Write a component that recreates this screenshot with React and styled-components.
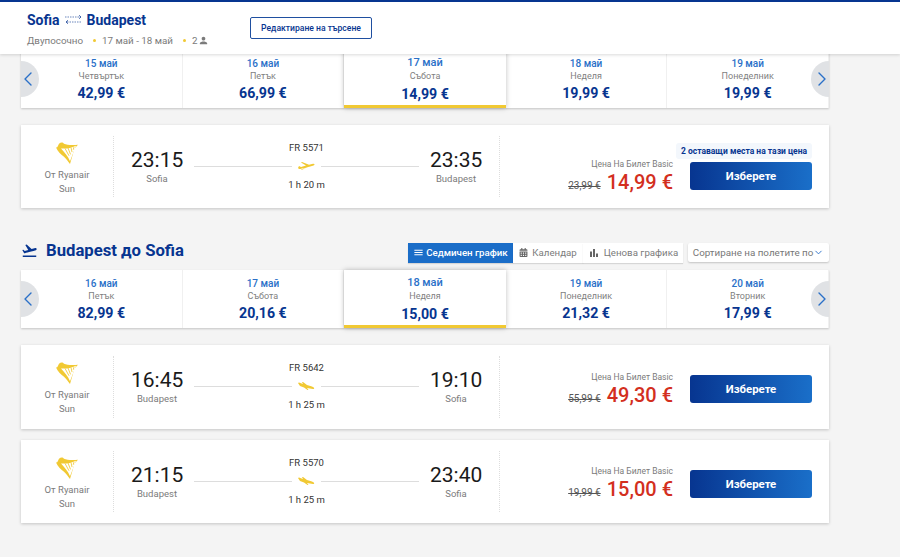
import React from "react";
import styled, { createGlobalStyle } from "styled-components";
import { ChevronLeft, ChevronRight, ChevronDown } from "lucide-react";
import { MdFlightTakeoff, MdMenu, MdPerson, MdBarChart } from "react-icons/md";
import { FaCalendarAlt } from "react-icons/fa";

const BLUE = "#073590";
const LINK = "#2a70c8";
const YELLOW = "#f1c933";

const outboundDays = [
  { date: "15 май", day: "Четвъртък", price: "42,99 €" },
  { date: "16 май", day: "Петък", price: "66,99 €" },
  { date: "17 май", day: "Събота", price: "14,99 €", active: true },
  { date: "18 май", day: "Неделя", price: "19,99 €" },
  { date: "19 май", day: "Понеделник", price: "19,99 €" },
];

const returnDays = [
  { date: "16 май", day: "Петък", price: "82,99 €" },
  { date: "17 май", day: "Събота", price: "20,16 €" },
  { date: "18 май", day: "Неделя", price: "15,00 €", active: true },
  { date: "19 май", day: "Понеделник", price: "21,32 €" },
  { date: "20 май", day: "Вторник", price: "17,99 €" },
];

const returnFlights = [
  { number: "FR 5642", from: "16:45", to: "19:10", duration: "1 h 25 m", oldPrice: "55,99 €", price: "49,30 €" },
  { number: "FR 5570", from: "21:15", to: "23:40", duration: "1 h 25 m", oldPrice: "19,99 €", price: "15,00 €" },
];

const GlobalStyle = createGlobalStyle`
  html, body {
    margin: 0;
    background: #f4f4f4;
    font-family: Roboto, "Liberation Sans", sans-serif;
  }
  * { box-sizing: border-box; }
`;

const Page = styled.div`
  width: 900px;
  height: 557px;
  overflow: hidden;
  background: #f4f4f4;
`;

const Header = styled.header`
  position: relative;
  z-index: 2;
  height: 54px;
  padding: 10px 0 0 27px;
  display: flex;
  align-items: flex-start;
  background: #fff;
  border-top: 2px solid ${BLUE};
  box-shadow: 0 1px 3px rgba(0, 0, 0, 0.15);
`;

const Summary = styled.div`
  width: 223px;
`;

const Route = styled.div`
  display: flex;
  align-items: center;
  gap: 5px;
  height: 15px;
  font-size: 14px;
  font-weight: 700;
  color: ${BLUE};
`;

const Meta = styled.div`
  display: flex;
  align-items: center;
  height: 13px;
  margin-top: 7px;
  font-size: 9.8px;
  color: #7b7b7b;
`;

const Dot = styled.span`
  width: 3px;
  height: 3px;
  margin: 0 6px 0 10px;
  border-radius: 50%;
  background: ${YELLOW};
`;

const EditButton = styled.button`
  width: 122px;
  height: 22px;
  margin-top: 5px;
  padding: 0;
  font: 500 8.6px Roboto, sans-serif;
  color: ${BLUE};
  background: #fff;
  border: 1px solid #1f4fa0;
  border-radius: 2px;
`;

const Main = styled.main`
  width: 808px;
  margin-left: 21px;
`;

const DayStrip = styled.div`
  position: relative;
  display: grid;
  grid-template-columns: repeat(5, 1fr);
  height: 58px;
  margin-top: ${(p) => p.$offset}px;
  background: #fff;
  box-shadow: 0 1px 2px rgba(0, 0, 0, 0.2);
`;

const DayCell = styled.div`
  position: relative;
  display: flex;
  flex-direction: column;
  align-items: center;
  justify-content: flex-end;
  padding-bottom: 6px;
  border-right: 1px solid #f0f0f0;

  ${(p) =>
    p.$active &&
    `
    padding-bottom: 2px;
    border-right: 0;
    border-bottom: 3px solid ${YELLOW};
    box-shadow: 0 0 5px rgba(0, 0, 0, 0.25);
    z-index: 1;
  `}
`;

const DayDate = styled.div`
  font-size: ${(p) => (p.$active ? 11 : 10)}px;
  line-height: 13px;
  font-weight: 500;
  color: ${LINK};
`;

const DayName = styled.div`
  margin-top: ${(p) => (p.$active ? 2 : 1)}px;
  font-size: 9px;
  line-height: 11px;
  color: #7f7f7f;
`;

const DayPrice = styled.div`
  margin-top: ${(p) => (p.$active ? 4 : 3)}px;
  font-size: 14.2px;
  line-height: 17px;
  font-weight: 700;
  color: ${BLUE};
`;

const Arrow = styled.div`
  position: absolute;
  z-index: 2;
  top: 11px;
  ${(p) => (p.$right ? "right: 0; padding-left: 4px" : "left: 0; padding-right: 4px")};
  width: 18px;
  height: 36px;
  display: flex;
  align-items: center;
  justify-content: center;
  background: #e0e2e5;
  color: ${LINK};
  border-radius: ${(p) => (p.$right ? "18px 0 0 18px" : "0 18px 18px 0")};

  svg {
    flex: none;
  }
`;

const Card = styled.article`
  display: flex;
  height: ${(p) => p.$height || 83}px;
  margin-top: ${(p) => p.$gap}px;
  background: #fff;
  box-shadow: 0 1px 3px rgba(0, 0, 0, 0.2);
`;

const Carrier = styled.div`
  width: 93px;
  margin: 11px 0;
  display: flex;
  flex-direction: column;
  align-items: center;
  font-size: 9.5px;
  line-height: 14px;
  color: #7b7b7b;
  border-right: 1px dotted #ddd;
`;

const Logo = styled.svg`
  width: 22px;
  height: 22px;
  margin: 6px 0 4px;
`;

const Flight = styled.div`
  width: 386px;
  margin: 11px 0;
  padding: 0 17px;
  display: flex;
  gap: 11px;
  border-right: 1px dotted #ddd;
`;

const Stop = styled.div`
  width: 52px;
  padding-top: 12px;
  text-align: center;
`;

const Time = styled.div`
  font-size: 21px;
  line-height: 24px;
  color: #1a1a1a;
`;

const Place = styled.div`
  margin-top: 1px;
  font-size: 9.5px;
  line-height: 12px;
  color: #7b7b7b;
`;

const Path = styled.div`
  width: 225px;
  padding-top: 6px;
  text-align: center;
  font-size: 9.5px;
  line-height: 12px;
  color: #333;
`;

const PathLine = styled.div`
  display: flex;
  align-items: center;
  gap: 6px;
  margin: 7px 0 8px;
  height: 10px;

  &::before,
  &::after {
    content: "";
    flex: 1;
    height: 1px;
    background: #ddd;
  }
`;

const Fare = styled.div`
  flex: 1;
  display: flex;
  justify-content: flex-end;
  align-items: flex-start;
  gap: 17px;
  padding: ${(p) => (p.$badge ? 18 : 30)}px 17px 0 0;
`;

const FareInfo = styled.div`
  align-self: flex-end;
  margin-bottom: ${(p) => (p.$badge ? 14 : 22)}px;
  text-align: right;
`;

const FareLabel = styled.div`
  font-size: 8.5px;
  line-height: 11px;
  color: #7b7b7b;
`;

const FarePrice = styled.div`
  display: flex;
  align-items: baseline;
  justify-content: flex-end;
  gap: 6px;
`;

const OldPrice = styled.span`
  font-size: 10px;
  color: #555;
  text-decoration: line-through;
`;

const Price = styled.span`
  font-size: 20px;
  line-height: 24px;
  font-weight: 500;
  color: #d32f1e;
`;

const Actions = styled.div`
  width: 122px;
  display: flex;
  flex-direction: column;
  align-items: flex-end;
`;

const SeatsBadge = styled.div`
  width: 136px;
  height: 16px;
  margin-bottom: 3px;
  flex: none;
  text-align: center;
  font-size: 8.5px;
  line-height: 16px;
  font-weight: 700;
  white-space: nowrap;
  color: ${BLUE};
  background: #f3f7fc;
  border-radius: 3px;
`;

const SelectButton = styled.button`
  width: 122px;
  height: 28px;
  padding: 0;
  font: 700 11.4px Roboto, sans-serif;
  color: #fff;
  background: linear-gradient(90deg, ${BLUE}, #1a6fc9);
  border: 0;
  border-radius: 3px;
`;

const SectionHead = styled.div`
  display: flex;
  align-items: center;
  height: 21px;
  margin-top: 34px;
`;

const SectionTitle = styled.h2`
  flex: 1;
  display: flex;
  align-items: center;
  gap: 8px;
  margin: 0 0 4px;
  font-size: 16.7px;
  font-weight: 700;
  color: ${BLUE};
`;

const ViewTab = styled.div`
  display: flex;
  align-items: center;
  justify-content: center;
  gap: ${(p) => (p.$active ? 2 : 4)}px;
  width: ${(p) => p.$width}px;
  height: 20px;
  font-size: 9.7px;
  font-weight: ${(p) => (p.$active ? 500 : 400)};
  color: ${(p) => (p.$active ? "#fff" : "#7b7b7b")};
  background: ${(p) => (p.$active ? "#1a6dc8" : "#fff")};
  box-shadow: 0 1px 1px rgba(0, 0, 0, 0.12);

  svg {
    color: ${(p) => (p.$active ? "#fff" : "#666")};
  }
`;

const SortSelect = styled.div`
  display: flex;
  align-items: center;
  justify-content: center;
  width: 141px;
  height: 19px;
  margin-left: 5px;
  font-size: 9.8px;
  white-space: nowrap;
  color: #777;
  background: #fff;
  box-shadow: 0 1px 2px rgba(0, 0, 0, 0.2);
  border-radius: 2px;
`;

function SwapIcon() {
  return (
    <svg width="17" height="11" viewBox="0 0 17 11" fill="none" stroke={BLUE} strokeWidth="0.8">
      <path d="M0 3h15" strokeDasharray="1.5 1" opacity="0.75" />
      <path d="M14 1.300l2 1.700-2 1.700" />
      <path d="M2 8h15" strokeDasharray="1.5 1" opacity="0.75" />
      <path d="M3 6.300L1 8l2 1.700" />
    </svg>
  );
}

function HarpLogo() {
  return (
    <Logo viewBox="0 0 22 24" preserveAspectRatio="none">
      <path
        fill={YELLOW}
        d="M0 6c1.500.5 2-2 3-4 2-2 4-1.500 5 0 3 1.500 9 1.500 14 1l-3.500 4L14 24c-2-3-3-4.500-6-8-3-2.500-6-5-8-10z"
      />
      <path fill="#fff" d="M5 7c4 .5 10 0 15-3L14 21C12 15 8 11 5 7z" />
      <path stroke={YELLOW} strokeWidth="0.9" d="M9 7l4 8M12 6.500l2.500 7M15 6l1 5M18 5.500l-.8 3" />
    </Logo>
  );
}

function PlaneIcon({ landing }) {
  return (
    <svg width="17" height="8" viewBox="0 0 17 8" fill={YELLOW}>
      {landing ? (
        <path d="M0 1L1 .5 5 2 4 0h1l4 3 5 1.500c2.500 1 3 2.500 1 2.500L9 6l1.500 2h-1L6 5.500 2 4z" />
      ) : (
        <path d="M0 6l1 1c3 0 11-2.500 14.500-3.500C17 3 17 1.500 15 1.700L11 2.700 4 0 3 .5l5 3L3 5 1 4zM3 7.500L8 6 3.500 8z" />
      )}
    </svg>
  );
}

function Days({ days, offset }) {
  return (
    <DayStrip $offset={offset}>
      <Arrow>
        <ChevronLeft size={24} strokeWidth={1.4} />
      </Arrow>
      {days.map((d) => (
        <DayCell key={d.date} $active={d.active}>
          <DayDate $active={d.active}>{d.date}</DayDate>
          <DayName $active={d.active}>{d.day}</DayName>
          <DayPrice $active={d.active}>{d.price}</DayPrice>
        </DayCell>
      ))}
      <Arrow $right>
        <ChevronRight size={24} strokeWidth={1.4} />
      </Arrow>
    </DayStrip>
  );
}

function FlightCard({ flight, fromCity, toCity, landing, badge, gap, height }) {
  return (
    <Card $gap={gap} $height={height}>
      <Carrier>
        <HarpLogo />
        <div>От Ryanair</div>
        <div>Sun</div>
      </Carrier>
      <Flight>
        <Stop>
          <Time>{flight.from}</Time>
          <Place>{fromCity}</Place>
        </Stop>
        <Path>
          <div>{flight.number}</div>
          <PathLine>
            <PlaneIcon landing={landing} />
          </PathLine>
          <div>{flight.duration}</div>
        </Path>
        <Stop>
          <Time>{flight.to}</Time>
          <Place>{toCity}</Place>
        </Stop>
      </Flight>
      <Fare $badge={badge}>
        <FareInfo $badge={badge}>
          <FareLabel>Цена На Билет Basic</FareLabel>
          <FarePrice>
            <OldPrice>{flight.oldPrice}</OldPrice>
            <Price>{flight.price}</Price>
          </FarePrice>
        </FareInfo>
        <Actions>
          {badge && <SeatsBadge>{badge}</SeatsBadge>}
          <SelectButton>Изберете</SelectButton>
        </Actions>
      </Fare>
    </Card>
  );
}

export default function App() {
  return (
    <Page>
      <GlobalStyle />
      <Header>
        <Summary>
          <Route>
            Sofia <SwapIcon /> Budapest
          </Route>
          <Meta>
            Двупосочно
            <Dot />
            17 май - 18 май
            <Dot />2
            <MdPerson size={11} />
          </Meta>
        </Summary>
        <EditButton>Редактиране на търсене</EditButton>
      </Header>
      <Main>
        <Days days={outboundDays} offset={-4} />
        <FlightCard
          flight={{
            number: "FR 5571",
            from: "23:15",
            to: "23:35",
            duration: "1 h 20 m",
            oldPrice: "23,99 €",
            price: "14,99 €",
          }}
          fromCity="Sofia"
          toCity="Budapest"
          badge="2 оставащи места на тази цена"
          gap={17}
        />
        <SectionHead>
          <SectionTitle>
            <MdFlightTakeoff size={17} />
            Budapest до Sofia
          </SectionTitle>
          <ViewTab $active $width={105}>
            <MdMenu size={11} />
            Седмичен график
          </ViewTab>
          <ViewTab $width={70}>
            <FaCalendarAlt size={9} />
            Календар
          </ViewTab>
          <ViewTab $width={100}>
            <MdBarChart size={12} />
            Ценова графика
          </ViewTab>
          <SortSelect>
            Сортиране на полетите по
            <ChevronDown size={11} color={LINK} />
          </SortSelect>
        </SectionHead>
        <Days days={returnDays} offset={7} />
        <FlightCard flight={returnFlights[0]} fromCity="Budapest" toCity="Sofia" landing gap={17} height={84} />
        <FlightCard flight={returnFlights[1]} fromCity="Budapest" toCity="Sofia" landing gap={11} />
      </Main>
    </Page>
  );
}
